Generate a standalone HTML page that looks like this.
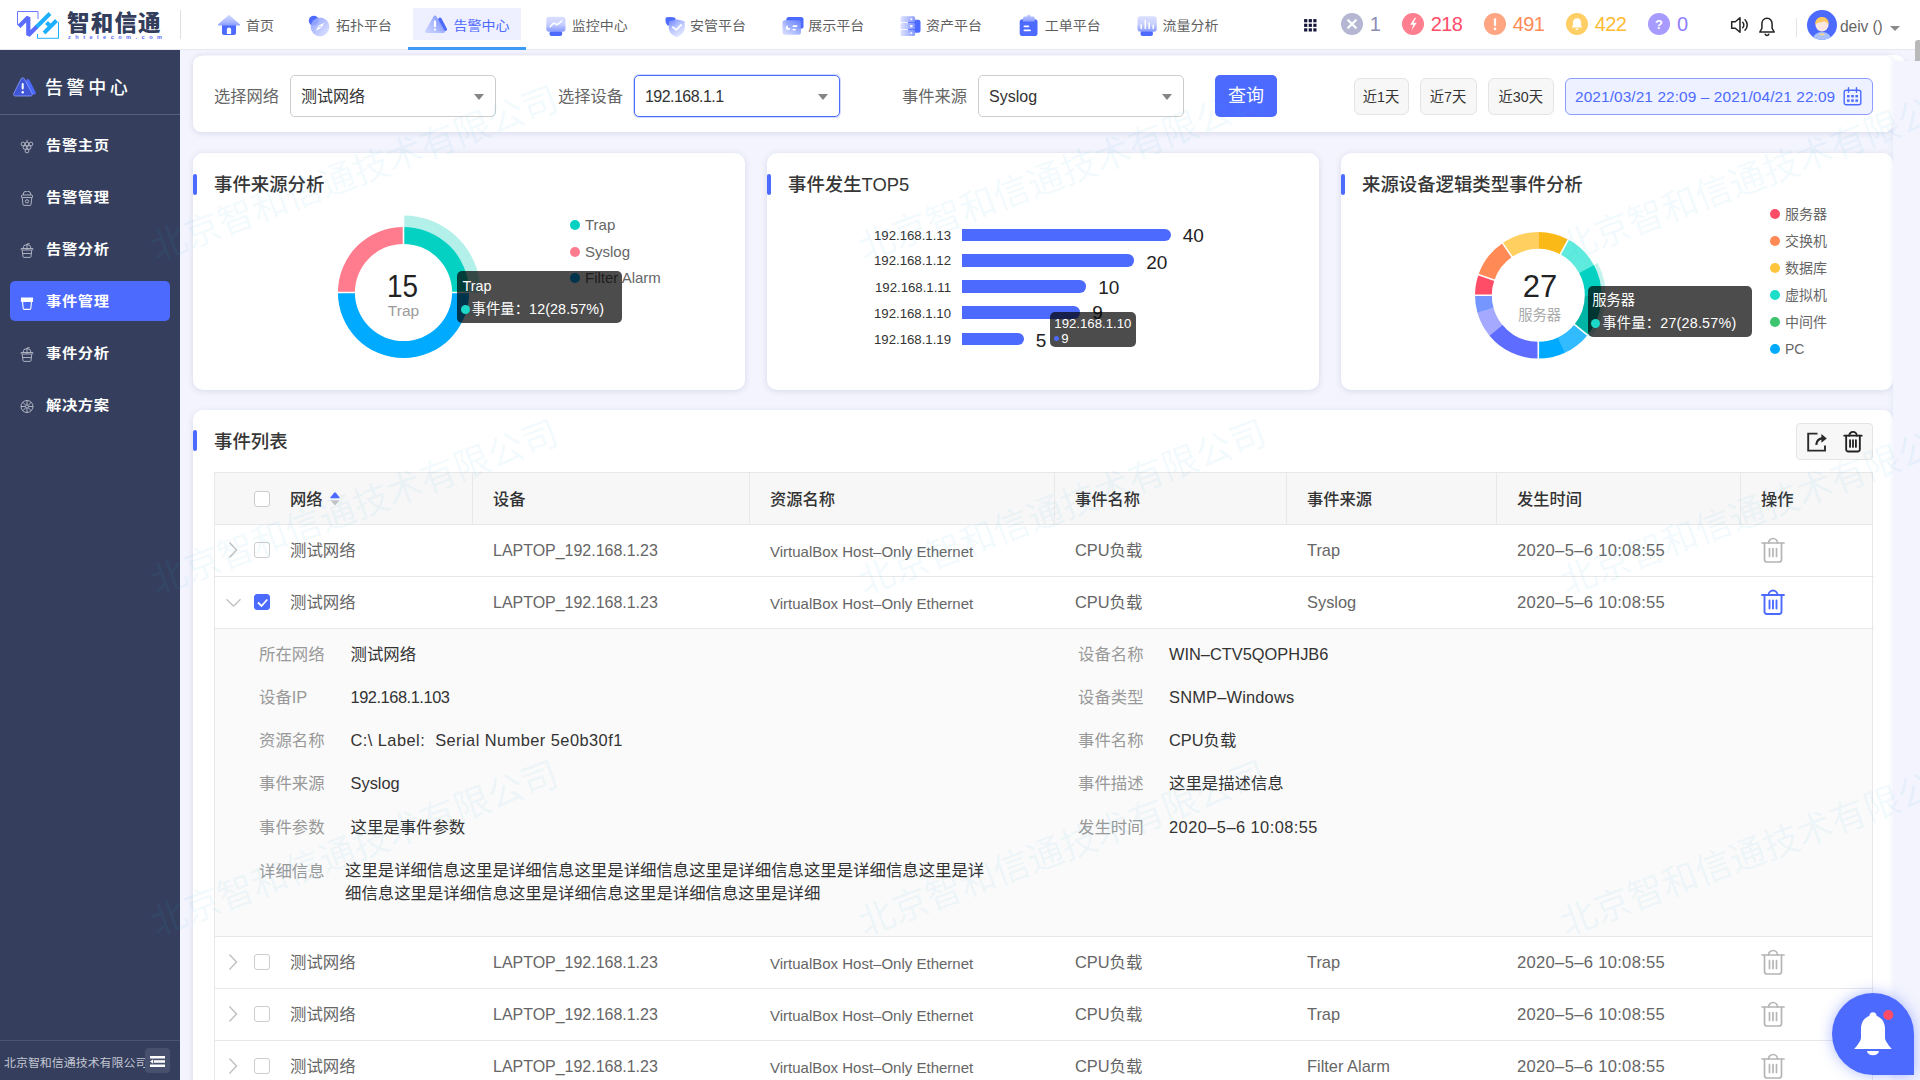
<!DOCTYPE html>
<html lang="zh-CN">
<head>
<meta charset="utf-8">
<title>告警中心 - 事件管理</title>
<style>
*{box-sizing:border-box;margin:0;padding:0}
html,body{width:1920px;height:1080px;overflow:hidden;background:#f3f4fd;font-family:"Liberation Sans","Noto Sans CJK SC",sans-serif;color:#333}
#app{position:relative;width:1920px;height:1080px;overflow:hidden;background:#f3f4fd}
.abs{position:absolute}
/* header */
#hdr{position:absolute;left:0;top:0;width:1920px;height:50px;background:#fff;border-bottom:1px solid #e6e7ef;z-index:5}
.nav{position:absolute;top:8px;height:32px;line-height:32px;font-size:14px;color:#5f5f5f;white-space:nowrap}
.nav svg{position:absolute;left:0;top:5px}
.nav span{position:absolute;left:27px;top:1px;transform:scaleY(.9);transform-origin:50% 50%}
.nav.act{color:#4d6aff}
.cnt{position:absolute;top:11px;height:26px;line-height:26px;font-size:20px;white-space:nowrap;letter-spacing:-0.6px}
.dot22{position:absolute;top:13px;width:22px;height:22px;border-radius:50%}
/* sidebar */
#side{position:absolute;left:0;top:50px;width:180px;height:1030px;background:#353f5d;z-index:4}
.mi{position:absolute;left:10px;width:160px;height:40px;border-radius:5px;color:#fff;font-size:15.3px;font-weight:700;line-height:42px;letter-spacing:0.6px}
.mi span{position:absolute;left:36px;top:0;transform:scaleY(.88);transform-origin:50% 50%}
.mi svg{position:absolute;left:10px;top:14px}
.mi.on{background:#4d6aff}
/* cards */
.card{position:absolute;background:#fff;border-radius:10px;box-shadow:0 1px 6px rgba(80,90,140,.17)}
.ttl{position:absolute;left:21px;font-size:18.400px;color:#363636;font-weight:500;white-space:nowrap;line-height:26px}
.bar{position:absolute;left:0;width:3.6px;height:21px;background:#4d6aff;border-radius:2px}
.lbl{position:absolute;font-size:16.300px;color:#666;white-space:nowrap;line-height:24px}
.sel{position:absolute;top:19px;width:206px;height:42px;border:1px solid #ccc;border-radius:5px;background:#fff;font-size:16px;color:#333;line-height:41px;padding-left:10px}
.sel i{position:absolute;right:11px;top:18px;width:0;height:0;border-left:5px solid transparent;border-right:5px solid transparent;border-top:6px solid #858585}
.qb{position:absolute;top:21.5px;height:37.5px;border:1px solid #e4e4e4;background:#f7f7f7;border-radius:6px;font-size:14.3px;color:#333;text-align:center;line-height:37px}
.tip{position:absolute;background:rgba(0,0,0,.7);border-radius:5px;color:#fff;font-size:14.3px;white-space:nowrap;z-index:3}
.lg{position:absolute;font-size:14px;color:#666;white-space:nowrap;line-height:20px}
.lg i{position:absolute;left:-15px;top:5px;width:10px;height:10px;border-radius:50%}
/* table */
.th{position:absolute;top:0;height:52px;line-height:52px;font-size:16.300px;font-weight:500;color:#333;border-left:1px solid #e8e8e8;padding-left:20px;white-space:nowrap}
.tr{position:absolute;left:0;width:1659px;height:52px;border-bottom:1px solid #e8e8e8;font-size:16.400px;color:#666;line-height:51px;white-space:nowrap}
.tr span{position:absolute;top:0}
.cb{position:absolute;left:40px;top:17px;width:16px;height:16px;border:1px solid #ccc;border-radius:3px;background:#fff}
.cb.ck{background:#4d6aff;border-color:#4d6aff}
.dl{position:absolute;font-size:16.400px;color:#999;white-space:nowrap;line-height:24px}
.dv{position:absolute;font-size:16.400px;color:#333;white-space:nowrap;line-height:24px}
.wm{position:absolute;font-size:36px;color:rgba(50,175,228,.07);white-space:nowrap;transform:rotate(-20.6deg);transform-origin:0 50%;z-index:20;line-height:40px;pointer-events:none}
</style>
</head>
<body>
<div id="app">

<!-- HEADER -->
<div id="hdr">
<svg class="abs" style="left:15px;top:8px" width="48" height="34" viewBox="15 8 48 34">
<path d="M17.5 25V11.5H38V19" fill="none" stroke="#6a78ff" stroke-width="1"/>
<path d="M58.5 22V38.3H37.5V34" fill="none" stroke="#1eb0ff" stroke-width="1"/>
<path d="M19 26.5L28.3 17.2V35.2L37.5 26" fill="none" stroke="#5b6cff" stroke-width="4.2" stroke-linejoin="miter" stroke-miterlimit="1.6"/>
<path d="M36.5 27L50 13.5M44 33L56.5 20.5M46.5 22.5L50 26" fill="none" stroke="#1eb0ff" stroke-width="4"/>
</svg>
<div class="abs" style="left:67px;top:8px;font-size:22.5px;font-weight:900;color:#333d5c;letter-spacing:1.2px;line-height:32px;white-space:nowrap">智和信通</div>
<svg class="abs" style="left:66px;top:34px" width="100" height="8" viewBox="0 0 100 8"><text x="2" y="5.2" font-family="Liberation Sans, sans-serif" font-size="5.6" font-weight="700" fill="#5b6cff" textLength="94" lengthAdjust="spacing">zhtelecom.com</text></svg>
<div class="abs" style="left:180px;top:10px;width:1px;height:29px;background:#e0e0e0"></div>
<svg width="0" height="0" style="position:absolute"><defs>
<linearGradient id="g1" x1="0" y1="0" x2="0" y2="1"><stop offset="0" stop-color="#d3daff"/><stop offset="1" stop-color="#8c9fff"/></linearGradient>
<linearGradient id="g2" x1="0" y1="0" x2="1" y2="1"><stop offset="0" stop-color="#8296ff"/><stop offset="1" stop-color="#dfe4ff"/></linearGradient>
<linearGradient id="g3" x1="1" y1="0" x2="0" y2="1"><stop offset="0" stop-color="#7d92ff"/><stop offset="1" stop-color="#d6dcff"/></linearGradient>
<linearGradient id="g4" x1="0" y1="0" x2="1" y2="0"><stop offset="0" stop-color="#dbe0ff"/><stop offset="1" stop-color="#8296ff"/></linearGradient>
<linearGradient id="g7" x1="0" y1="0" x2=".6" y2="1"><stop offset="0" stop-color="#6f87ff"/><stop offset=".5" stop-color="#b4c0ff"/><stop offset="1" stop-color="#e3e7ff"/></linearGradient><linearGradient id="g8" x1="1" y1="0" x2="0" y2="1"><stop offset="0" stop-color="#6b83ff"/><stop offset=".5" stop-color="#9fb0ff"/><stop offset="1" stop-color="#dce1ff"/></linearGradient><linearGradient id="g9" x1="0" y1="0" x2="0" y2="1"><stop offset="0" stop-color="#c3ccff"/><stop offset="1" stop-color="#8a9dff"/></linearGradient><linearGradient id="g5" x1="0" y1="1" x2="1" y2=".3"><stop offset="0" stop-color="#ccd4ff"/><stop offset=".55" stop-color="#aab8ff"/><stop offset="1" stop-color="#7a90ff"/></linearGradient><linearGradient id="g6" x1="0" y1="0" x2="0" y2="1"><stop offset="0" stop-color="#d9deff"/><stop offset=".5" stop-color="#c6ceff"/><stop offset="1" stop-color="#7f94ff"/></linearGradient></defs></svg>
<div class="abs" style="left:413px;top:8px;width:108px;height:32px;background:#eef0ff"></div>
<div class="abs" style="left:408px;top:47px;width:118px;height:3px;background:#3d9bf5;z-index:2"></div>
<div class="nav" style="left:218px"><svg style="top:6px" width="22" height="22" viewBox="0 0 22 22"><path d="M4 9.5h14v9.5a2 2 0 0 1-2 2H6a2 2 0 0 1-2-2z" fill="#4d6aff"/><path d="M11 .8L.2 10.2a.8.8 0 0 0 .5 1.4h20.600a.8.8 0 0 0 .5-1.400z" fill="url(#g1)" opacity=".95"/><path d="M8.900 20v-4.400a2.100 2.100 0 0 1 4.200 0V20z" fill="#fff"/></svg><span style="left:28px">首页</span></div>
<div class="nav" style="left:308px"><svg width="23" height="24" viewBox="0 0 23 24"><circle cx="5.800" cy="7.800" r="5" fill="#4d6aff"/><circle cx="12" cy="13.800" r="9.400" fill="url(#g2)" opacity=".9"/><path d="M16.400 9.800L13.200 15L10.800 12.600zM7.800 17.800L10.800 12.600L13.200 15z" fill="#fff"/><circle cx="12" cy="13.800" r=".8" fill="#9aaaff"/></svg><span style="left:28px">拓扑平台</span></div>
<div class="nav act" style="left:424px"><svg width="24" height="22" viewBox="0 0 24 22"><path d="M14.600 5.300a1.600 1.600 0 0 1 2.800 0l5.400 10.300a1.700 1.700 0 0 1-1.500 2.500H9z" fill="#4d6aff"/><path d="M9.500 3.500a1.700 1.700 0 0 1 3 0l8.200 14.300a1.500 1.500 0 0 1-1.300 2.300H2.600a1.500 1.500 0 0 1-1.300-2.300z" fill="url(#g5)" opacity=".96"/><rect x="9.900" y="7.600" width="2.100" height="6.700" rx="1" fill="#fff"/><circle cx="10.950" cy="16.700" r="1.150" fill="#fff"/></svg><span style="left:29.600000000000023px">告警中心</span></div>
<div class="nav" style="left:544.5px"><svg width="22" height="24" viewBox="0 0 22 24"><rect x="4.500" y="18.300" width="12.700" height="4.700" rx="2" fill="#4d6aff"/><rect x="1.300" y="3.700" width="19.200" height="15.100" rx="3" fill="url(#g6)" opacity=".96"/><path d="M5.100 13.700L8.800 10L12.200 11.700L16.700 8" fill="none" stroke="#fff" stroke-width="1.600" stroke-linecap="round" stroke-linejoin="round"/></svg><span style="left:27.3px">监控中心</span></div>
<div class="nav" style="left:663.5px"><svg width="24" height="26" viewBox="663.5 13 24 26"><path d="M665 18.800q0-1.300 1.300-1.500l3.700-.3l4 .6q1 .2 1 1.400v6.500h-8q-2-2-2-4.500z" fill="#4d6aff"/><path d="M668.300 22.300q0-1 1-1.300l6.500-1.400q.5-.1 1 0l6.500 1.400q1 .3 1 1.300v5.200c0 4.700-3.500 7.800-7.400 9.600q-.6.200-1.200 0c-3.900-1.800-7.400-4.900-7.400-9.600z" fill="url(#g7)" opacity=".95"/><path d="M672.200 27.200l3.500 2.700l5-5.100" fill="none" stroke="#fff" stroke-width="1.700" stroke-linecap="round" stroke-linejoin="round"/></svg><span style="left:26.5px">安管平台</span></div>
<div class="nav" style="left:781.5px"><svg width="24" height="26" viewBox="781.5 13 24 26"><rect x="785.800" y="17" width="17.200" height="11.800" rx="2.500" fill="#4d6aff"/><rect x="782" y="20.300" width="18.400" height="14.400" rx="2.500" fill="url(#g8)" opacity=".94"/><circle cx="787.500" cy="27.800" r="2.300" fill="#fff"/><path d="M787.500 27.800V25.300A2.500 2.500 0 0 1 790 27.800z" fill="#8da0ff"/><rect x="792" y="25.300" width="5" height="1.600" rx=".8" fill="#fff"/><rect x="792" y="28.800" width="3.300" height="1.600" rx=".8" fill="#fff"/></svg><span style="left:26.8px">展示平台</span></div>
<div class="nav" style="left:899.5px"><svg width="24" height="26" viewBox="899.5 13 24 26"><rect x="907.500" y="19.700" width="12.500" height="13" rx="2.200" fill="#4d6aff"/><rect x="900" y="16.200" width="14.600" height="6" rx="1.500" fill="url(#g4)" opacity=".93"/><rect x="900" y="23.100" width="14.600" height="6.200" rx="1.500" fill="url(#g4)" opacity=".93"/><rect x="900" y="30.100" width="14.600" height="6" rx="1.500" fill="url(#g4)" opacity=".93"/><rect x="910" y="18.400" width="1.700" height="1.700" fill="#fff"/><rect x="909.700" y="25" width="2.300" height="2.300" fill="#fff"/><rect x="910" y="32.200" width="1.700" height="1.700" fill="#fff"/></svg><span style="left:26.5px">资产平台</span></div>
<div class="nav" style="left:1017.5px"><svg width="24" height="26" viewBox="1017.5 13 24 26"><rect x="1019.200" y="19.200" width="17.800" height="16.800" rx="2.800" fill="#4d6aff"/><path d="M1022.500 21.500v-3.500q0-1.500 1.500-1.500h2.200a2.200 2.200 0 0 1 4.300 0h2.200q1.500 0 1.500 1.500v3.500z" fill="url(#g9)"/><rect x="1023" y="25.400" width="5.800" height="1.800" rx=".9" fill="#fff"/><rect x="1023" y="29.400" width="7.400" height="1.800" rx=".9" fill="#fff"/></svg><span style="left:27.2px">工单平台</span></div>
<div class="nav" style="left:1135.5px"><svg width="24" height="26" viewBox="1135.5 13 24 26"><rect x="1140" y="31" width="12.500" height="5" rx="2.200" fill="#4d6aff"/><rect x="1137" y="16.300" width="19.300" height="15.500" rx="3" fill="url(#g6)" opacity=".96"/><path d="M1140.700 24.800v3.600M1144.800 20.500v7.900M1148.600 22.700v5.700M1152.700 25.200v3.200" stroke="#fff" stroke-width="1.500" stroke-linecap="round"/></svg><span style="left:27.1px">流量分析</span></div>

<svg class="abs" style="left:1304px;top:19px" width="13" height="13" viewBox="0 0 13 13" fill="#15153a"><rect x="0.1" y="0.1" width="3.2" height="3.2"/><rect x="4.7" y="0.1" width="3.2" height="3.2"/><rect x="9.3" y="0.1" width="3.2" height="3.2"/><rect x="0.1" y="4.7" width="3.2" height="3.2"/><rect x="4.7" y="4.7" width="3.2" height="3.2"/><rect x="9.3" y="4.7" width="3.2" height="3.2"/><rect x="0.1" y="9.3" width="3.2" height="3.2"/><rect x="4.7" y="9.3" width="3.2" height="3.2"/><rect x="9.3" y="9.3" width="3.2" height="3.2"/></svg>
<svg class="abs" style="left:1341.3px;top:12.900px" width="22" height="22" viewBox="0 0 22 22"><circle cx="11" cy="11" r="11" fill="#b5b6d1"/><path d="M7.200 7.200l7.600 7.600M14.800 7.200l-7.600 7.600" stroke="#fff" stroke-width="2.300" stroke-linecap="round"/></svg><div class="cnt" style="left:1369.8px;color:#8a8db5">1</div>
<svg class="abs" style="left:1402.3px;top:12.900px" width="22" height="22" viewBox="0 0 22 22"><circle cx="11" cy="11" r="11" fill="#ff7e8f"/><path d="M12.800 4.800L8.200 11.800h3.100L9.300 17.400l5.500-7.600h-3.200l2.400-5z" fill="#fff"/></svg><div class="cnt" style="left:1430.8px;color:#ff4d68">218</div>
<svg class="abs" style="left:1484.2px;top:12.900px" width="22" height="22" viewBox="0 0 22 22"><circle cx="11" cy="11" r="11" fill="#ffa582"/><rect x="9.900" y="5.200" width="2.200" height="8" rx="1.100" fill="#fff"/><circle cx="11" cy="15.900" r="1.300" fill="#fff"/></svg><div class="cnt" style="left:1512.7px;color:#ff8a56">491</div>
<svg class="abs" style="left:1566.3px;top:12.900px" width="22" height="22" viewBox="0 0 22 22"><circle cx="11" cy="11" r="11" fill="#ffcf66"/><path d="M11 5.300c-2.500 0-4.100 1.900-4.100 4.200v3.200l-1.200 1.700h10.600l-1.200-1.700V9.500c0-2.300-1.600-4.200-4.100-4.200z" fill="#fff"/><path d="M9.500 15.400a1.500 1.500 0 0 0 3 0z" fill="#fff"/></svg><div class="cnt" style="left:1594.8px;color:#ffbb33">422</div>
<svg class="abs" style="left:1648.4px;top:12.900px" width="22" height="22" viewBox="0 0 22 22"><circle cx="11" cy="11" r="11" fill="#a89bff"/><text x="11" y="15.600" text-anchor="middle" font-family="Liberation Sans, sans-serif" font-weight="700" font-size="13" fill="#fff">?</text></svg><div class="cnt" style="left:1676.9px;color:#8f7dff">0</div>
<svg class="abs" style="left:1730px;top:16px" width="20" height="18" viewBox="0 0 20 18" fill="none" stroke="#222" stroke-width="1.500" stroke-linejoin="round" stroke-linecap="round"><path d="M1.700 5.800h3.600L10 1.800v14.400L5.300 12.200H1.700z"/><path d="M12.700 6.300a3.800 3.800 0 0 1 0 5.400"/><path d="M15 3.800a7.200 7.200 0 0 1 0 10.400"/></svg>
<svg class="abs" style="left:1758px;top:16px" width="18" height="21" viewBox="0 0 18 21" fill="none" stroke="#222" stroke-width="1.500" stroke-linejoin="round" stroke-linecap="round"><path d="M9 2.300c-3.300 0-5.100 2.600-5.100 5.600v4.400L1.800 16h14.400l-2.100-3.700V7.900c0-3-1.800-5.600-5.100-5.600z"/><path d="M7.200 18.300a1.900 1.900 0 0 0 3.600 0"/></svg>
<div class="abs" style="left:1796px;top:18px;width:1px;height:19px;background:#e4e4e4"></div>
<svg class="abs" style="left:1806.500px;top:10px" width="30" height="30" viewBox="0 0 30 30"><defs><clipPath id="avc"><circle cx="15" cy="15" r="15"/></clipPath></defs><circle cx="15" cy="15" r="15" fill="#4d6aff"/><g clip-path="url(#avc)"><ellipse cx="15" cy="29" rx="9" ry="7" fill="#a9c0ff"/><circle cx="15" cy="15" r="6.500" fill="#fde6e2"/><path d="M8.300 14.500c-.5-5 3-7.500 6.700-7.500s7.200 2.500 6.700 7.500c-1.500-2-3.500-3-5.200-3.200c-1 .8-2 1-3 1c-2.200.2-4 1-5.200 2.200z" fill="#ffc860"/><path d="M13 23l2 1.200l2-1.200l.5 2.200h-5z" fill="#ffd673"/></g></svg>
<div class="abs" style="left:1840px;top:15px;font-size:15.6px;color:#666;line-height:24px;white-space:nowrap;letter-spacing:-0.1px">deiv ()</div>
<div class="abs" style="left:1889.500px;top:25.500px;width:0;height:0;border-left:5px solid transparent;border-right:5px solid transparent;border-top:5.500px solid #8a8a8a"></div>
</div>

<!-- SIDEBAR -->
<div id="side">
<svg class="abs" style="left:13px;top:27px" width="24" height="21" viewBox="0 0 24 21"><path d="M13.500 2.800a1.600 1.600 0 0 1 2.700 0l6.500 12.500a1.600 1.600 0 0 1-1.400 2.300H9z" fill="#4d6aff"/><path d="M8.200 1.700a1.700 1.700 0 0 1 3 0l8 14.800a1.700 1.700 0 0 1-1.500 2.500H2.200a1.700 1.700 0 0 1-1.500-2.500z" fill="#4056d6" stroke="#8fa0ff" stroke-width=".8"/><rect x="8.700" y="6" width="2" height="6.500" rx="1" fill="#fff"/><circle cx="9.700" cy="15.200" r="1.200" fill="#fff"/></svg>
<div class="abs" style="left:45px;top:24px;font-size:18px;color:#fff;font-weight:500;letter-spacing:3.6px;line-height:28px;white-space:nowrap">告警中心</div>
<div class="abs" style="left:0;top:64px;width:180px;height:1px;background:#56607c"></div>
<div class="mi" style="top:75.2px"><svg width="14" height="15" viewBox="0 0 14 15" fill="none" stroke="#b9bdc9" stroke-width=".9"><circle cx="3" cy="5" r="1.900"/><circle cx="7" cy="5" r="1.900"/><circle cx="11" cy="5" r="1.900"/><circle cx="5" cy="8.500" r="1.900"/><circle cx="9" cy="8.500" r="1.900"/><circle cx="7" cy="12" r="1.900"/><path d="M7 3V.8"/></svg><span>告警主页</span></div>
<div class="mi" style="top:127.2px"><svg width="14" height="15" viewBox="0 0 14 15" fill="none" stroke="#b9bdc9" stroke-width=".9"><path d="M2.200 6.500h9.600l-.8 7a1 1 0 0 1-1 .9H4a1 1 0 0 1-1-.9z"/><path d="M1.500 6.500V5a1 1 0 0 1 1-1h9a1 1 0 0 1 1 1v1.500"/><path d="M3 4a4 4 0 0 1 8 0"/><circle cx="7" cy="10.300" r="1.600"/></svg><span>告警管理</span></div>
<div class="mi" style="top:179.2px"><svg width="14" height="15" viewBox="0 0 14 15" fill="none" stroke="#b9bdc9" stroke-width=".9"><path d="M2.200 7h9.600l-.8 6.500a1 1 0 0 1-1 .9H4a1 1 0 0 1-1-.9z"/><path d="M1.200 7V5.500h11.600V7"/><path d="M3 5.500a4 4 0 0 1 8 0"/><path d="M7 7V1l2.500-.5M2.800 10.500h8.400"/></svg><span>告警分析</span></div>
<div class="mi on" style="top:231.2px"><svg width="14" height="15" viewBox="0 0 14 15" fill="none" stroke="#fff" stroke-width="1.100"><path d="M2.500 6.500h9l-.7 7a1 1 0 0 1-1 .9H4.200a1 1 0 0 1-1-.9z"/><path d="M1.500 3h11v3.500h-11z" fill="#fff"/></svg><span>事件管理</span></div>
<div class="mi" style="top:283.2px"><svg width="14" height="15" viewBox="0 0 14 15" fill="none" stroke="#b9bdc9" stroke-width=".9"><path d="M2.200 7h9.600l-.8 6.500a1 1 0 0 1-1 .9H4a1 1 0 0 1-1-.9z"/><path d="M1.200 7V5.500h11.600V7"/><path d="M3 5.500a4 4 0 0 1 8 0"/><path d="M7 7V1l2.500-.5M2.800 10.500h8.400"/></svg><span>事件分析</span></div>
<div class="mi" style="top:335.2px"><svg width="14" height="15" viewBox="0 0 14 15" fill="none" stroke="#b9bdc9" stroke-width=".9"><circle cx="7" cy="7.500" r="6"/><circle cx="7" cy="7.500" r="1.600"/><path d="M7 1.500v4.400M7 9.100v4.400M1 7.500h4.400M8.600 7.500H13M2.800 3.300l3 3M8.200 8.700l3 3M11.200 3.300l-3 3M5.800 8.700l-3 3"/></svg><span>解决方案</span></div>
<div class="abs" style="left:0;top:990px;width:180px;height:1px;background:#4a5470"></div>
<div class="abs" style="left:4px;top:1002.5px;font-size:12px;color:#c3c6d2;line-height:20px;white-space:nowrap;letter-spacing:-0.05px;transform:scaleY(.92)">北京智和信通技术有限公司</div>
<div class="abs" style="left:145px;top:998px;width:25px;height:25px;border-radius:4px;background:#47516e"></div>
<svg class="abs" style="left:149px;top:1005px" width="17" height="13" viewBox="0 0 17 13"><path d="M1 2.200h15M5 6.500h11M1 10.800h15" stroke="#fff" stroke-width="2.400"/><path d="M1 6.500L4.200 4.300v4.400z" fill="#fff"/></svg>

</div>

<div class="abs" style="left:195px;top:55px;width:1710px;height:30px;background:#fff;border-radius:9px;box-shadow:0 1px 5px rgba(120,130,200,.12)"></div>
<div class="card" id="flt" style="left:193px;top:56px;width:1700px;height:76px;border-radius:8px">
<div class="lbl" style="left:21px;top:28px">选择网络</div>
<div class="sel" style="left:97px">测试网络<i></i></div>
<div class="lbl" style="left:365px;top:28px">选择设备</div>
<div class="sel" style="left:441px;border-color:#4d6aff;box-shadow:0 0 0 1px rgba(77,106,255,.25);letter-spacing:-.55px">192.168.1.1<i></i></div>
<div class="lbl" style="left:709px;top:28px">事件来源</div>
<div class="sel" style="left:785px">Syslog<i></i></div>
<div class="abs" style="left:1022px;top:19px;width:62px;height:42px;border-radius:5px;background:#4d6aff;color:#fff;font-size:18px;text-align:center;line-height:42px">查询</div>
<div class="qb" style="left:1160.500px;width:55px">近1天</div>
<div class="qb" style="left:1226.500px;width:57px">近7天</div>
<div class="qb" style="left:1294.500px;width:66.500px">近30天</div>
<div class="abs" style="left:1372px;top:21.5px;width:308px;height:37.5px;border:1px solid #8c9dff;border-radius:6px;background:#eef1ff;color:#4d6aff;font-size:15.4px;line-height:35px;padding-left:9px;white-space:nowrap;letter-spacing:.1px">2021/03/21 22:09 – 2021/04/21 22:09</div>
<svg class="abs" style="left:1650px;top:30.5px" width="19" height="19" viewBox="0 0 19 19" fill="none" stroke="#4d6aff" stroke-width="1.400"><rect x="1.200" y="3.200" width="16.600" height="14.600" rx="2"/><path d="M5.500 .8v4.400M13.500 .8v4.400" stroke-linecap="round"/><g fill="#4d6aff" stroke="none"><rect x="4" y="8" width="2.600" height="2.400"/><rect x="8.200" y="8" width="2.600" height="2.400"/><rect x="12.400" y="8" width="2.600" height="2.400"/><rect x="4" y="12.400" width="2.600" height="2.400"/><rect x="8.200" y="12.400" width="2.600" height="2.400"/><rect x="12.400" y="12.400" width="2.600" height="2.400"/></g></svg>
</div>

<div class="card" style="left:193px;top:153px;width:552px;height:236.6px">
<div class="bar" style="top:21px"></div><div class="ttl" style="top:19px">事件来源分析</div>
<svg class="abs" style="left:0;top:0" width="552" height="236" viewBox="0 0 552 236"><path d="M210.50 62.50A77 77 0 0 1 287.50 139.50L275.90 139.50A65.39999999999999 65.39999999999999 0 0 0 210.50 74.10Z" fill="#b3f0ea"/><path d="M210.50 73.90A65.6 65.6 0 0 1 276.10 139.50L259.10 139.50A48.6 48.6 0 0 0 210.50 90.90Z" fill="#05d1c2"/><path d="M276.10 139.50A65.6 65.6 0 0 1 144.90 139.50L161.90 139.50A48.6 48.6 0 0 0 259.10 139.50Z" fill="#00aaff"/><path d="M144.90 139.50A65.6 65.6 0 0 1 210.50 73.90L210.50 90.90A48.6 48.6 0 0 0 161.90 139.50Z" fill="#ff7c8f"/><path d="M210.5 91.9V61.5M258.1 139.5H277.1M162.9 139.5H143.9" stroke="#fff" stroke-width="1.6"/><text x="194.1" y="144.1" font-family="Liberation Sans, sans-serif" font-size="31.5" fill="#222" textLength="31" lengthAdjust="spacingAndGlyphs">15</text><text x="210.5" y="163.0" text-anchor="middle" font-family="Liberation Sans, sans-serif" font-size="15.5" fill="#9b9b9b">Trap</text></svg>
<div class="lg" style="left:392px;top:61.8px;font-size:15px"><i style="background:#05d1c2"></i>Trap</div>
<div class="lg" style="left:392px;top:88.6px;font-size:15px"><i style="background:#ff7c8f"></i>Syslog</div>
<div class="lg" style="left:392px;top:115.4px;font-size:15px"><i style="background:#00aaff"></i>Filter Alarm</div>
<div class="tip" style="left:264px;top:118px;width:165px;height:52px"><div class="abs" style="left:5.500px;top:5px;line-height:20px">Trap</div><div class="abs" style="left:3.500px;top:34px;width:9px;height:9px;border-radius:50%;background:#1dd8c8"></div><div class="abs" style="left:14.500px;top:28px;line-height:20px;letter-spacing:.1px">事件量：12(28.57%)</div></div>
</div>
<div class="card" style="left:767px;top:153px;width:552px;height:236.6px">
<div class="bar" style="top:21px"></div><div class="ttl" style="top:19px">事件发生TOP5</div>
<div class="abs" style="left:84px;width:100px;text-align:right;top:73.0px;font-size:13.200px;line-height:20px;color:#333">192.168.1.13</div><div class="abs" style="left:195.2px;top:75.8px;width:208.5px;height:12.500px;background:#4d6aff;border-radius:0 6.250px 6.250px 0"></div><div class="abs" style="left:415.7px;top:71.2px;font-size:19px;line-height:24px;color:#222">40</div>
<div class="abs" style="left:84px;width:100px;text-align:right;top:98.3px;font-size:13.200px;line-height:20px;color:#333">192.168.1.12</div><div class="abs" style="left:195.2px;top:101.1px;width:172px;height:12.500px;background:#4d6aff;border-radius:0 6.250px 6.250px 0"></div><div class="abs" style="left:379.2px;top:98px;font-size:19px;line-height:24px;color:#222">20</div>
<div class="abs" style="left:84px;width:100px;text-align:right;top:124.7px;font-size:13.200px;line-height:20px;color:#333">192.168.1.11</div><div class="abs" style="left:195.2px;top:127.4px;width:124px;height:12.500px;background:#4d6aff;border-radius:0 6.250px 6.250px 0"></div><div class="abs" style="left:331.2px;top:122.5px;font-size:19px;line-height:24px;color:#222">10</div>
<div class="abs" style="left:84px;width:100px;text-align:right;top:150.6px;font-size:13.200px;line-height:20px;color:#333">192.168.1.10</div><div class="abs" style="left:195.2px;top:153.4px;width:118px;height:12.500px;background:#4d6aff;border-radius:0 6.250px 6.250px 0"></div><div class="abs" style="left:325.2px;top:148.4px;font-size:19px;line-height:24px;color:#222">9</div>
<div class="abs" style="left:84px;width:100px;text-align:right;top:176.8px;font-size:13.200px;line-height:20px;color:#333">192.168.1.19</div><div class="abs" style="left:195.2px;top:179.6px;width:61.5px;height:12.500px;background:#4d6aff;border-radius:0 6.250px 6.250px 0"></div><div class="abs" style="left:268.7px;top:175.7px;font-size:19px;line-height:24px;color:#222">5</div>
<div class="tip" style="left:283.3px;top:159px;width:85.300px;height:35px;font-size:13.200px"><div class="abs" style="left:4px;top:1.500px;line-height:20px">192.168.1.10</div><div class="abs" style="left:3.500px;top:24px;width:5px;height:5px;border-radius:50%;background:#4d6aff"></div><div class="abs" style="left:11px;top:17px;line-height:20px">9</div></div>
</div>
<div class="card" style="left:1341px;top:153px;width:552px;height:236.6px">
<div class="bar" style="top:21px"></div><div class="ttl" style="top:19px">来源设备逻辑类型事件分析</div>
<svg class="abs" style="left:0;top:0" width="552" height="236" viewBox="0 0 552 236"><path d="M256.62 110.09A67.5 67.5 0 0 1 249.76 184.78L246.49 182.14A63.3 63.3 0 0 0 252.93 112.10Z" fill="#c4f3ee"/><path d="M197.30 79.00A63.3 63.3 0 0 1 227.60 86.72L219.56 101.47A46.5 46.5 0 0 0 197.30 95.80Z" fill="#fbb917"/><path d="M227.31 86.57A63.3 63.3 0 0 1 253.09 112.39L238.28 120.33A46.5 46.5 0 0 0 219.35 101.36Z" fill="#5eebdd"/><path d="M252.93 112.10A63.3 63.3 0 0 1 260.60 142.63L243.80 142.54A46.5 46.5 0 0 0 238.16 120.11Z" fill="#05d1c2"/><path d="M260.60 142.30A63.3 63.3 0 0 1 246.28 182.39L233.28 171.75A46.5 46.5 0 0 0 243.80 142.30Z" fill="#00b5a6"/><path d="M246.49 182.14A63.3 63.3 0 0 1 223.75 199.81L216.73 184.55A46.5 46.5 0 0 0 233.44 171.56Z" fill="#33bbff"/><path d="M224.05 199.67A63.3 63.3 0 0 1 196.97 205.60L197.06 188.80A46.5 46.5 0 0 0 216.95 184.44Z" fill="#00aaff"/><path d="M197.30 205.60A63.3 63.3 0 0 1 148.32 182.39L161.32 171.75A46.5 46.5 0 0 0 197.30 188.80Z" fill="#5e6cff"/><path d="M148.53 182.65A63.3 63.3 0 0 1 136.36 159.43L152.53 154.88A46.5 46.5 0 0 0 161.47 171.94Z" fill="#a5a9ff"/><path d="M136.45 159.75A63.3 63.3 0 0 1 134.00 141.97L150.80 142.06A46.5 46.5 0 0 0 152.60 155.12Z" fill="#7595ff"/><path d="M134.00 142.30A63.3 63.3 0 0 1 137.56 121.38L153.41 126.93A46.5 46.5 0 0 0 150.80 142.30Z" fill="#ff4d68"/><path d="M137.45 121.69A63.3 63.3 0 0 1 161.81 89.88L171.23 103.80A46.5 46.5 0 0 0 153.33 127.16Z" fill="#ff8a56"/><path d="M161.54 90.07A63.3 63.3 0 0 1 197.63 79.00L197.54 95.80A46.5 46.5 0 0 0 171.03 103.93Z" fill="#ffd060"/><path d="M218.87 102.24L230.01 81.55M232.66 170.93L250.92 185.72M197.30 187.80L197.30 211.30M151.80 142.30L128.30 142.30M154.28 127.49L132.06 119.84M171.59 104.76L158.32 85.37" stroke="#fff" stroke-width="1.600" fill="none"/><text x="181.8" y="144.2" font-family="Liberation Sans, sans-serif" font-size="32" fill="#222" textLength="34.4" lengthAdjust="spacingAndGlyphs">27</text><text x="198.6" y="167.4" text-anchor="middle" font-family="Liberation Sans, Noto Sans CJK SC, sans-serif" font-size="14.3" fill="#aaa">服务器</text></svg>
<div class="lg" style="left:444px;top:51.2px"><i style="background:#ff4d68"></i>服务器</div>
<div class="lg" style="left:444px;top:78.1px"><i style="background:#ff8a56"></i>交换机</div>
<div class="lg" style="left:444px;top:105.0px"><i style="background:#ffc53d"></i>数据库</div>
<div class="lg" style="left:444px;top:131.9px"><i style="background:#1ddfc9"></i>虚拟机</div>
<div class="lg" style="left:444px;top:158.8px"><i style="background:#3cc46e"></i>中间件</div>
<div class="lg" style="left:444px;top:185.7px"><i style="background:#00aaff"></i>PC</div>
<div class="tip" style="left:246.7px;top:133px;width:164px;height:50.600px"><div class="abs" style="left:4.500px;top:4px;line-height:20px">服务器</div><div class="abs" style="left:3.500px;top:33px;width:9px;height:9px;border-radius:50%;background:#1dd8c8"></div><div class="abs" style="left:14.500px;top:27px;line-height:20px;letter-spacing:.22px">事件量：27(28.57%)</div></div>
</div>

<div class="card" style="left:193px;top:411px;width:1700px;height:700px;box-shadow:0 -1px 0 0 #fff,0 1px 6px rgba(80,90,140,.17)">
<div class="bar" style="top:18.500px"></div><div class="ttl" style="top:18.3px">事件列表</div>
<div class="abs" style="left:1603px;top:11.5px;width:77px;height:37px;border:1px solid #e5e5e5;border-radius:4px;background:#f7f7f7"></div>
<svg class="abs" style="left:1613px;top:19.5px" width="23" height="22" viewBox="0 0 23 22" fill="none" stroke="#2a2a2a" stroke-width="1.9" stroke-linejoin="miter" stroke-linecap="butt"><path d="M11.500 2.600H2.200v17h16.800v-5"/><path d="M10.200 13.800c.6-4.200 3-6.300 6.200-6.400" stroke-width="2.300"/><path d="M15.400 3l5.400 4.400l-5.400 4.400z" fill="#2a2a2a" stroke="none"/></svg>
<svg class="abs" style="left:1649.5px;top:18.6px" width="20" height="23" viewBox="0 0 24 26" fill="none" stroke="#222" stroke-width="2.200" stroke-linecap="round" stroke-linejoin="round"><path d="M1.500 6h21"/><path d="M7.500 6a4.500 4.500 0 0 1 9 0"/><path d="M3.800 6v16.500a2.500 2.500 0 0 0 2.500 2.500h11.400a2.500 2.500 0 0 0 2.500-2.500V6"/><path d="M8.500 11.500v8M12 11.500v8M15.500 11.500v8"/></svg>
<div class="abs" style="left:21px;top:61px;width:1659px;height:640px;border:1px solid #e8e8e8;border-bottom:none">
<div class="abs" style="left:0;top:0;width:1657px;height:52px;background:#f7f7f7;border-bottom:1px solid #e8e8e8">
<div class="th" style="left:0;width:257px;border-left:none;padding-left:75px">网络</div><div class="th" style="left:257px;width:277px">设备</div><div class="th" style="left:534px;width:305px">资源名称</div><div class="th" style="left:839px;width:232px">事件名称</div><div class="th" style="left:1071px;width:210px">事件来源</div><div class="th" style="left:1281px;width:244px">发生时间</div><div class="th" style="left:1525px;width:132px">操作</div>
<div class="cb" style="left:39px;top:17.5px"></div><svg class="abs" style="left:114px;top:18px" width="12" height="16" viewBox="0 0 12 16"><path d="M6 1.200q.5 0 .9.500l3.800 4.800q.3.700-.5.700H1.800q-.8 0-.5-.700l3.800-4.800q.4-.500.900-.500z" fill="#4d6aff"/><path d="M1.500 9.200h9l-4.500 5.400z" fill="#c4c4c4"/></svg>
</div>
<div class="tr" style="top:52px"><svg class="abs" style="left:12px;top:16px" width="12" height="18" viewBox="0 0 12 18" fill="none" stroke="#c2c2c2" stroke-width="1.500"><path d="M2.500 1.500l7 7.500l-7 7.500"/></svg><div class="cb" style="left:39px"></div><span style="left:75px">测试网络</span><span style="left:278px;font-size:16px;letter-spacing:-.02px">LAPTOP_192.168.1.23</span><span style="left:555px;font-size:15px;top:1px">VirtualBox Host–Only Ethernet</span><span style="left:860px">CPU负载</span><span style="left:1092px">Trap</span><span style="left:1302px;letter-spacing:.3px;font-size:16.6px">2020–5–6 10:08:55</span><span style="left:1546.4px;top:12.3px;line-height:0"><svg width="24" height="26" viewBox="0 0 24 26" fill="none" stroke="#b5b5b5" stroke-width="1.7" stroke-linecap="round" stroke-linejoin="round"><path d="M1 6h22"/><path d="M7.500 6a4.500 4.500 0 0 1 9 0"/><path d="M3.500 6v16.500a2.500 2.500 0 0 0 2.500 2.500h12a2.500 2.500 0 0 0 2.500-2.500V6"/><path d="M8.500 11.500v8M12 11.500v8M15.500 11.500v8"/></svg></span></div>
<div class="tr" style="top:104px"><svg class="abs" style="left:10px;top:19.5px" width="17" height="11.3" viewBox="0 0 18 12" fill="none" stroke="#c2c2c2" stroke-width="1.500"><path d="M1.500 2.500l7.500 7l7.500-7"/></svg><div class="cb ck" style="left:39px"><svg style="position:absolute;left:1px;top:1.500px" width="13" height="12" viewBox="0 0 13 12" fill="none" stroke="#fff" stroke-width="1.800"><path d="M2 5.500l3.500 3.500l5.800-6.500"/></svg></div><span style="left:75px">测试网络</span><span style="left:278px;font-size:16px;letter-spacing:-.02px">LAPTOP_192.168.1.23</span><span style="left:555px;font-size:15px;top:1px">VirtualBox Host–Only Ethernet</span><span style="left:860px">CPU负载</span><span style="left:1092px">Syslog</span><span style="left:1302px;letter-spacing:.3px;font-size:16.6px">2020–5–6 10:08:55</span><span style="left:1546.4px;top:12.3px;line-height:0"><svg width="24" height="26" viewBox="0 0 24 26" fill="none" stroke="#4d6aff" stroke-width="1.9" stroke-linecap="round" stroke-linejoin="round"><path d="M1 6h22"/><path d="M7.500 6a4.500 4.500 0 0 1 9 0"/><path d="M3.500 6v16.500a2.500 2.500 0 0 0 2.500 2.500h12a2.500 2.500 0 0 0 2.500-2.500V6"/><path d="M8.500 11.500v8M12 11.500v8M15.500 11.500v8"/></svg></span></div>
<div class="abs" style="left:0;top:156px;width:1657px;height:308px;background:#fafafa;border-bottom:1px solid #e8e8e8">
<div class="dl" style="left:44px;top:12.5px">所在网络</div><div class="dv" style="left:135.500px;top:12.5px">测试网络</div><div class="dl" style="left:44px;top:55.8px">设备IP</div><div class="dv" style="left:135.500px;top:55.8px;letter-spacing:-.45px">192.168.1.103</div><div class="dl" style="left:44px;top:99.1px">资源名称</div><div class="dv" style="left:135.500px;top:99.1px;letter-spacing:.45px">C:\ Label:&nbsp; Serial Number 5e0b30f1</div><div class="dl" style="left:44px;top:142.4px">事件来源</div><div class="dv" style="left:135.500px;top:142.4px">Syslog</div><div class="dl" style="left:44px;top:185.7px">事件参数</div><div class="dv" style="left:135.500px;top:185.7px">这里是事件参数</div><div class="dl" style="left:863px;top:12.5px">设备名称</div><div class="dv" style="left:954px;top:12.5px">WIN–CTV5QOPHJB6</div>
<div class="dl" style="left:863px;top:55.8px">设备类型</div><div class="dv" style="left:954px;top:55.8px;letter-spacing:.2px">SNMP–Windows</div>
<div class="dl" style="left:863px;top:99.1px">事件名称</div><div class="dv" style="left:954px;top:99.1px">CPU负载</div>
<div class="dl" style="left:863px;top:142.4px">事件描述</div><div class="dv" style="left:954px;top:142.4px">这里是描述信息</div>
<div class="dl" style="left:863px;top:185.7px">发生时间</div><div class="dv" style="left:954px;top:185.7px;letter-spacing:.45px">2020–5–6 10:08:55</div>
<div class="dl" style="left:44px;top:229.5px">详细信息</div><div class="dv" style="left:130px;top:230.0px;width:652px;white-space:normal;line-height:23px">这里是详细信息这里是详细信息这里是详细信息这里是详细信息这里是详细信息这里是详细信息这里是详细信息这里是详细信息这里是详细信息这里是详细</div>
</div>
<div class="tr" style="top:464px"><svg class="abs" style="left:12px;top:16px" width="12" height="18" viewBox="0 0 12 18" fill="none" stroke="#c2c2c2" stroke-width="1.500"><path d="M2.500 1.500l7 7.500l-7 7.500"/></svg><div class="cb" style="left:39px"></div><span style="left:75px">测试网络</span><span style="left:278px;font-size:16px;letter-spacing:-.02px">LAPTOP_192.168.1.23</span><span style="left:555px;font-size:15px;top:1px">VirtualBox Host–Only Ethernet</span><span style="left:860px">CPU负载</span><span style="left:1092px">Trap</span><span style="left:1302px;letter-spacing:.3px;font-size:16.6px">2020–5–6 10:08:55</span><span style="left:1546.4px;top:12.3px;line-height:0"><svg width="24" height="26" viewBox="0 0 24 26" fill="none" stroke="#b5b5b5" stroke-width="1.7" stroke-linecap="round" stroke-linejoin="round"><path d="M1 6h22"/><path d="M7.500 6a4.500 4.500 0 0 1 9 0"/><path d="M3.500 6v16.500a2.500 2.500 0 0 0 2.500 2.500h12a2.500 2.500 0 0 0 2.500-2.500V6"/><path d="M8.500 11.500v8M12 11.500v8M15.500 11.500v8"/></svg></span></div>
<div class="tr" style="top:516px"><svg class="abs" style="left:12px;top:16px" width="12" height="18" viewBox="0 0 12 18" fill="none" stroke="#c2c2c2" stroke-width="1.500"><path d="M2.500 1.500l7 7.500l-7 7.500"/></svg><div class="cb" style="left:39px"></div><span style="left:75px">测试网络</span><span style="left:278px;font-size:16px;letter-spacing:-.02px">LAPTOP_192.168.1.23</span><span style="left:555px;font-size:15px;top:1px">VirtualBox Host–Only Ethernet</span><span style="left:860px">CPU负载</span><span style="left:1092px">Trap</span><span style="left:1302px;letter-spacing:.3px;font-size:16.6px">2020–5–6 10:08:55</span><span style="left:1546.4px;top:12.3px;line-height:0"><svg width="24" height="26" viewBox="0 0 24 26" fill="none" stroke="#b5b5b5" stroke-width="1.7" stroke-linecap="round" stroke-linejoin="round"><path d="M1 6h22"/><path d="M7.500 6a4.500 4.500 0 0 1 9 0"/><path d="M3.500 6v16.500a2.500 2.500 0 0 0 2.500 2.500h12a2.500 2.500 0 0 0 2.500-2.500V6"/><path d="M8.500 11.500v8M12 11.500v8M15.500 11.500v8"/></svg></span></div>
<div class="tr" style="top:568px"><svg class="abs" style="left:12px;top:16px" width="12" height="18" viewBox="0 0 12 18" fill="none" stroke="#c2c2c2" stroke-width="1.500"><path d="M2.500 1.500l7 7.500l-7 7.500"/></svg><div class="cb" style="left:39px"></div><span style="left:75px">测试网络</span><span style="left:278px;font-size:16px;letter-spacing:-.02px">LAPTOP_192.168.1.23</span><span style="left:555px;font-size:15px;top:1px">VirtualBox Host–Only Ethernet</span><span style="left:860px">CPU负载</span><span style="left:1092px">Filter Alarm</span><span style="left:1302px;letter-spacing:.3px;font-size:16.6px">2020–5–6 10:08:55</span><span style="left:1546.4px;top:12.3px;line-height:0"><svg width="24" height="26" viewBox="0 0 24 26" fill="none" stroke="#b5b5b5" stroke-width="1.7" stroke-linecap="round" stroke-linejoin="round"><path d="M1 6h22"/><path d="M7.500 6a4.500 4.500 0 0 1 9 0"/><path d="M3.500 6v16.500a2.500 2.500 0 0 0 2.500 2.500h12a2.500 2.500 0 0 0 2.500-2.500V6"/><path d="M8.500 11.500v8M12 11.500v8M15.500 11.500v8"/></svg></span></div>
</div>
</div>

<div class="abs" style="left:1893px;top:61px;width:27px;height:1019px;background:#f3f4fd;box-shadow:-2px 0 4px rgba(120,130,200,.07);z-index:6"></div>
<div class="abs" style="left:1915px;top:40px;width:5px;height:21px;background:#b9b9b9;border-radius:3px 0 0 0;z-index:7"></div>
<div class="abs" style="left:1832px;top:993px;width:82px;height:82px;border-radius:41px 41px 0 41px;background:#4d6aff;box-shadow:0 0 14px rgba(77,106,255,.45);z-index:8"></div>
<svg class="abs" style="left:1852px;top:1010px;z-index:9" width="42" height="48" viewBox="0 0 42 48"><path d="M21 2.200a3.600 3.600 0 0 0-3.600 3.800c-5.600 1.800-8.400 6.800-8.400 13v8.500c0 3-2.700 6.800-6.800 11.500h37.600c-4.100-4.700-6.800-8.500-6.800-11.500V19c0-6.200-2.800-11.200-8.400-13A3.600 3.600 0 0 0 21 2.200z" fill="#fff"/><path d="M15 41h12a6 4.200 0 0 1-12 0z" fill="#fff"/><circle cx="36.300" cy="5" r="5" fill="#ff4d68"/></svg>

<div class="wm" style="left:-550px;top:230px">北京智和信通技术有限公司</div><div class="wm" style="left:152px;top:230px">北京智和信通技术有限公司</div><div class="wm" style="left:860px;top:230px">北京智和信通技术有限公司</div><div class="wm" style="left:1562px;top:230px">北京智和信通技术有限公司</div><div class="wm" style="left:-550px;top:564px">北京智和信通技术有限公司</div><div class="wm" style="left:152px;top:564px">北京智和信通技术有限公司</div><div class="wm" style="left:860px;top:564px">北京智和信通技术有限公司</div><div class="wm" style="left:1562px;top:564px">北京智和信通技术有限公司</div><div class="wm" style="left:-550px;top:905px">北京智和信通技术有限公司</div><div class="wm" style="left:152px;top:905px">北京智和信通技术有限公司</div><div class="wm" style="left:860px;top:905px">北京智和信通技术有限公司</div><div class="wm" style="left:1562px;top:905px">北京智和信通技术有限公司</div>

</div>
</body>
</html>
